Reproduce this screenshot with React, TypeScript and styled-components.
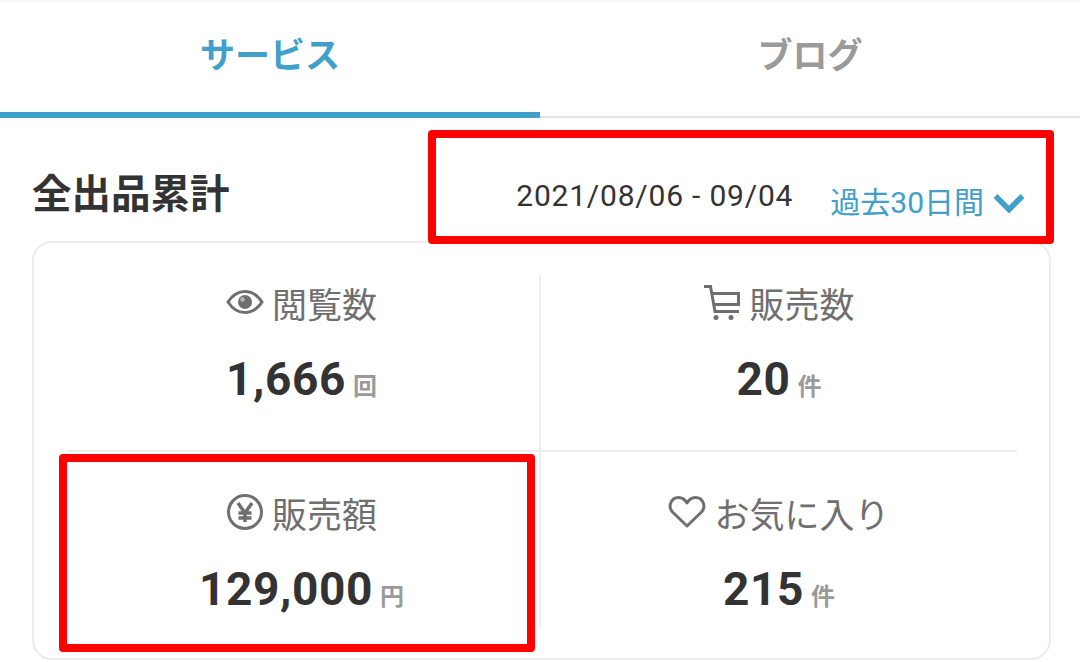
import React from "react";
import styled, { createGlobalStyle } from "styled-components";

const GlobalStyle = createGlobalStyle`
  html, body {
    margin: 0;
    padding: 0;
    background: #ffffff;
    font-family: Roboto, "Noto Sans CJK JP", sans-serif;
    overflow: hidden;
  }
`;

type StatType = {
  label: string;
  value: string;
  unit: string;
  icon: React.ReactNode;
};

const EyeIcon = () => (
  <svg width="38" height="26" viewBox="0 0 38 26" fill="none">
    <path
      d="M2 13C6.500 6 12 2.500 19 2.500S31.500 6 36 13c-4.500 7-10 10.500-17 10.500S6.500 20 2 13Z"
      stroke="#6f6f6f"
      strokeWidth="3"
    />
    <circle cx="19" cy="13" r="7" fill="#6f6f6f" />
    <circle cx="16.500" cy="10.500" r="2.200" fill="#ffffff" opacity="0.5" />
  </svg>
);

const CartIcon = () => (
  <svg width="38" height="36" viewBox="0 0 38 36" fill="none">
    <path d="M1 2.500h6.500L12 27.500h24" stroke="#6f6f6f" strokeWidth="3" />
    <path d="M8.500 9.500h27v11H10" stroke="#6f6f6f" strokeWidth="3" />
    <circle cx="13" cy="33.500" r="2.500" fill="#6f6f6f" />
    <circle cx="28" cy="33.500" r="2.500" fill="#6f6f6f" />
  </svg>
);

const YenIcon = () => (
  <svg width="38" height="38" viewBox="0 0 38 38" fill="none">
    <circle cx="19" cy="19" r="16.500" stroke="#6f6f6f" strokeWidth="3" />
    <path
      d="M12 10l7 10 7-10M19 20v9M12.500 20h13M12.500 25h13"
      stroke="#6f6f6f"
      strokeWidth="3.500"
    />
  </svg>
);

const HeartIcon = () => (
  <svg width="38" height="34" viewBox="0 0 38 34" fill="none">
    <path
      d="M19 31 4.500 17C-.500 11.500 3 2.500 10.500 2.500c3.800 0 6.500 2 8.500 5.500 2-3.500 4.700-5.500 8.500-5.500C35 2.500 38.500 11.500 33.500 17L19 31Z"
      stroke="#6f6f6f"
      strokeWidth="3"
      strokeLinejoin="round"
    />
  </svg>
);

const ChevronIcon = () => (
  <svg width="32" height="21" viewBox="0 0 32 21" fill="none">
    <path d="M2.500 3 16 16.500 29.500 3" stroke="#41a0c9" strokeWidth="5.500" />
  </svg>
);

const stats: StatType[] = [
  { label: "閲覧数", value: "1,666", unit: "回", icon: <EyeIcon /> },
  { label: "販売数", value: "20", unit: "件", icon: <CartIcon /> },
  { label: "販売額", value: "129,000", unit: "円", icon: <YenIcon /> },
  { label: "お気に入り", value: "215", unit: "件", icon: <HeartIcon /> },
];

export default function App() {
  return (
    <Page>
      <GlobalStyle />
      <Tabs>
        <Tab $active>サービス</Tab>
        <Tab>ブログ</Tab>
      </Tabs>

      <Header>
        <Title>全出品累計</Title>
        <Period>
          <DateRange>2021/08/06 - 09/04</DateRange>
          <PeriodSelect>
            過去30日間
            <ChevronIcon />
          </PeriodSelect>
        </Period>
        <Highlight $top={130} $left={428} $width={626} $height={114} />
      </Header>

      <Card>
        <Grid>
          {stats.map((stat, index) => (
            <Cell key={stat.label} $index={index}>
              <Label>
                {stat.icon}
                {stat.label}
              </Label>
              <ValueRow>
                <Value>{stat.value}</Value>
                <Unit>{stat.unit}</Unit>
              </ValueRow>
            </Cell>
          ))}
        </Grid>
        <Highlight $top={454} $left={59} $width={476} $height={198} />
      </Card>
    </Page>
  );
}

const Page = styled.div`
  width: 1080px;
  height: 662px;
  overflow: hidden;
  background: #ffffff;
  border-top: 2px solid #f6f6f6;
  box-sizing: border-box;
`;

const Tabs = styled.div`
  display: flex;
  height: 114px;
  border-bottom: 2px solid #e2e2e2;
`;

const Tab = styled.div<{ $active?: boolean }>`
  flex: 1;
  display: flex;
  align-items: center;
  justify-content: center;
  box-sizing: border-box;
  height: 116px;
  padding-bottom: 10px;
  font-size: 35px;
  font-weight: 700;
  color: ${(props) => (props.$active ? "#41a0c9" : "#9a9a9a")};
  border-bottom: 6px solid ${(props) => (props.$active ? "#41a0c9" : "transparent")};
`;

const Header = styled.div`
  display: flex;
  justify-content: space-between;
  align-items: flex-start;
  box-sizing: border-box;
  height: 123px;
  padding: 54px 55px 0 32px;
`;

const Title = styled.h2`
  margin: 0;
  font-size: 39.500px;
  line-height: 46px;
  font-weight: 700;
  color: #333333;
`;

const Period = styled.div`
  display: flex;
  align-items: flex-start;
  gap: 37px;
`;

const DateRange = styled.span`
  font-size: 30px;
  line-height: 40px;
  letter-spacing: 0.8px;
  color: #333333;
  margin-top: 4px;
`;

const PeriodSelect = styled.span`
  display: flex;
  align-items: center;
  gap: 9px;
  font-size: 30px;
  line-height: 40px;
  color: #41a0c9;
  margin-top: 11px;
`;

const Card = styled.div`
  box-sizing: border-box;
  width: 1019px;
  height: 419px;
  margin-left: 32px;
  padding: 32px 33px 30px;
  border: 2px solid #ececec;
  border-radius: 20px;
`;

const Grid = styled.div`
  display: grid;
  grid-template-columns: 474px 476px;
  grid-template-rows: 177px 176px;
`;

const Cell = styled.div<{ $index: number }>`
  display: flex;
  flex-direction: column;
  align-items: center;
  box-sizing: border-box;
  padding-top: ${(props) => (props.$index < 2 ? "0" : "33px")};
  padding-right: ${(props) => (props.$index % 2 === 0 ? "3px" : "0")};
  border-right: ${(props) =>
    props.$index % 2 === 0 ? "2px solid #ededed" : "none"};
  border-bottom: ${(props) => (props.$index < 2 ? "2px solid #ededed" : "none")};
`;

const Label = styled.div`
  display: flex;
  align-items: center;
  gap: 8px;
  height: 54px;
  font-size: 35px;
  color: #6f6f6f;
`;

const ValueRow = styled.div`
  display: flex;
  align-items: baseline;
  gap: 7px;
  margin-top: 23px;
`;

const Value = styled.span`
  font-size: 46px;
  line-height: 54px;
  font-weight: 700;
  letter-spacing: 0.6px;
  color: #333333;
`;

const Unit = styled.span`
  font-size: 24px;
  font-weight: 700;
  color: #9a9a9a;
`;

const Highlight = styled.div<{
  $top: number;
  $left: number;
  $width: number;
  $height: number;
}>`
  position: absolute;
  top: ${(props) => props.$top}px;
  left: ${(props) => props.$left}px;
  width: ${(props) => props.$width}px;
  height: ${(props) => props.$height}px;
  box-sizing: border-box;
  border: 8px solid #ff0000;
  border-radius: 4px;
`;
